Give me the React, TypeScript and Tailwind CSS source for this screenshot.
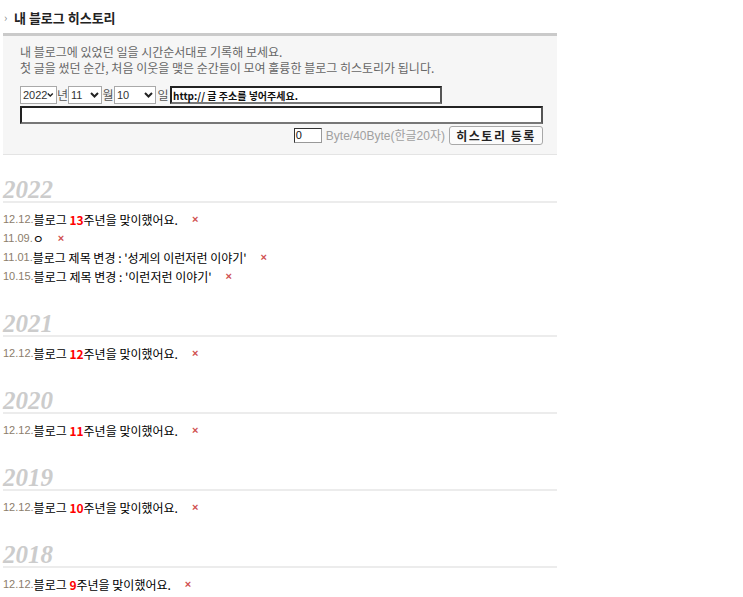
import React, { FC } from 'react';

type Entry = { date: string; text: React.ReactNode };
type YearBlock = { year: string; entries: Entry[] };

const Red: FC<{ children: React.ReactNode }> = ({ children }) => (
  <span className="text-[#ff0000] font-bold">{children}</span>
);

const history: YearBlock[] = [
  {
    year: '2022',
    entries: [
      { date: '12.12.', text: <>블로그 <Red>13</Red>주년을 맞이했어요.</> },
      { date: '11.09.', text: <>ㅇ</> },
      { date: '11.01.', text: <>블로그 제목 변경 : '성게의 이런저런 이야기'</> },
      { date: '10.15.', text: <>블로그 제목 변경 : '이런저런 이야기'</> },
    ],
  },
  { year: '2021', entries: [{ date: '12.12.', text: <>블로그 <Red>12</Red>주년을 맞이했어요.</> }] },
  { year: '2020', entries: [{ date: '12.12.', text: <>블로그 <Red>11</Red>주년을 맞이했어요.</> }] },
  { year: '2019', entries: [{ date: '12.12.', text: <>블로그 <Red>10</Red>주년을 맞이했어요.</> }] },
  { year: '2018', entries: [{ date: '12.12.', text: <>블로그 <Red>9</Red>주년을 맞이했어요.</> }] },
];

const Select: FC<{ value: string; width: string }> = ({ value, width }) => (
  <div
    className={`${width} h-[18px] bg-white border border-[#a9a9a9] flex items-center justify-between pl-[2px] pr-[2px] font-['Liberation_Sans',sans-serif] text-[11px] text-[#333]`}
  >
    <span>{value}</span>
    <svg width="9" height="6" viewBox="0 0 9 6">
      <path d="M1 1 L4.5 4.5 L8 1" fill="none" stroke="#222" strokeWidth="2" />
    </svg>
  </div>
);

const App: FC = () => {
  return (
    <div className="w-[743px] h-[597px] overflow-hidden bg-white font-['Noto_Sans_CJK_KR',sans-serif]">
      <div className="w-[554px] ml-[3px]">
        {/* title */}
        <h2 className="h-[33px] flex items-center pt-[2px] text-[13px] font-bold text-[#222] leading-none">
          <span className="text-[#888] text-[11px] font-normal w-[11px] pl-[1px]">›</span>
          내 블로그 히스토리
        </h2>

        {/* write panel */}
        <div className="border-t-[3px] border-[#cacaca] border-b border-b-[#e4e4e4] bg-[#f6f6f6] pl-[17px] pr-[14px] pt-[8px] pb-[9px]">
          <p className="text-[12px] leading-[16px] text-[#666]">내 블로그에 있었던 일을 시간순서대로 기록해 보세요.</p>
          <p className="text-[12px] leading-[16px] text-[#666]">첫 글을 썼던 순간, 처음 이웃을 맺은 순간들이 모여 훌륭한 블로그 히스토리가 됩니다.</p>

          <div className="mt-[10px] flex items-center h-[18px] text-[12px] text-[#555]">
            <Select value="2022" width="w-[37px]" />
            <span className="w-[11px] text-center">년</span>
            <Select value="11" width="w-[34px]" />
            <span className="w-[12px] text-center">월</span>
            <Select value="10" width="w-[42px]" />
            <span className="w-[14px] text-center">일</span>
            <div className="w-[272px] h-[18px] bg-white border-2 border-t-[#222] border-l-[#222] border-r-[#555] border-b-[#777] flex items-center px-[1px] text-[10px] font-semibold text-[#111]">
              http:// 글 주소를 넣어주세요.
            </div>
          </div>
          <div className="mt-[2px] w-[523px] h-[18px] bg-white border-2 border-t-[#222] border-l-[#222] border-r-[#555] border-b-[#777]" />
          <div className="mt-[2px] flex items-center justify-end h-[19px] w-[523px]">
            <div className="w-[28px] h-[15px] bg-white border border-t-[#333] border-l-[#333] border-r-[#999] border-b-[#999] font-['Liberation_Sans',sans-serif] text-[11px] leading-[13px] text-[#111] pl-[1px]">
              0
            </div>
            <span className="ml-[4px] text-[12px] text-[#a0a0a0] font-['Liberation_Sans',sans-serif]">
              Byte/40Byte(
              <span className="font-['Noto_Sans_CJK_KR',sans-serif]">한글</span>20
              <span className="font-['Noto_Sans_CJK_KR',sans-serif]">자</span>)
            </span>
            <button className="ml-[4px] w-[94px] h-[19px] bg-[#fbfbfb] border border-[#a8a8a8] rounded-[3px] text-[12px] font-bold text-[#222] tracking-[1.5px] leading-none">
              히스토리 등록
            </button>
          </div>
        </div>

        {/* history */}
        <div className="pt-[23px]">
          {history.map((block) => (
            <div key={block.year} className="pb-[26px]">
              <h3 className="h-[25px] border-b-2 border-[#ececec] font-['Liberation_Serif',serif] italic font-bold text-[25px] leading-[23px] text-[#cccccc]">
                {block.year}
              </h3>
              <ul className="mt-[7px]">
                {block.entries.map((e, id) => (
                  <li key={id} className="h-[19px] flex items-center text-[12px] text-black whitespace-nowrap">
                    <span className="font-['Liberation_Sans',sans-serif] text-[11px] text-[#8b7d6b]">{e.date}</span>
                    <span>{e.text}</span>
                    <span className="ml-[14px] text-[11px] font-bold text-[#d05050] font-['Liberation_Sans',sans-serif]">×</span>
                  </li>
                ))}
              </ul>
            </div>
          ))}
        </div>
      </div>
    </div>
  );
};

export default App;
